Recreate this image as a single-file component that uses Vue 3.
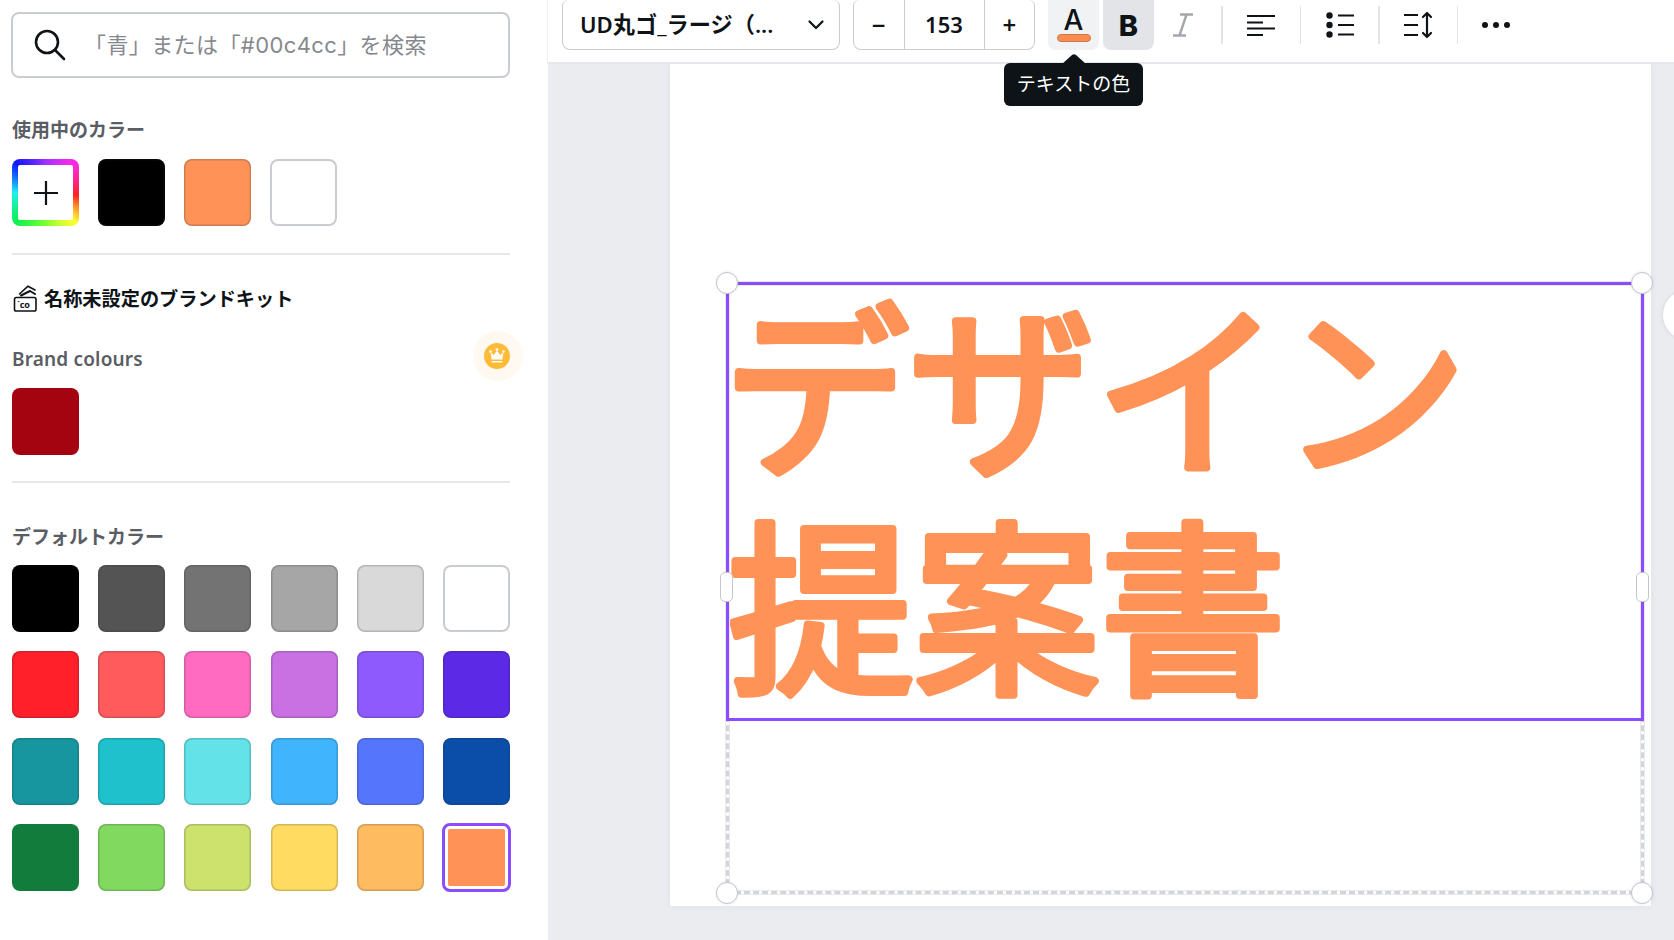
<script setup>
const used = ['#000000', '#ff9257', '#ffffff']
const rows = [
  '#000000', '#545454', '#737373', '#a6a6a6', '#d9d9d9', '#ffffff',
  '#ff202a', '#ff5a5c', '#ff6bc1', '#c970e3', '#8e59fd', '#5c29e6',
  '#17969f', '#1ec1cc', '#63e2e8', '#40b4fd', '#5576fc', '#0a4eaa',
  '#117c3b', '#81d95f', '#cce26d', '#ffdb61', '#ffbb5f', '#ff9257'
]
const isWhite = (c) => c === '#ffffff'
</script>

<template>
  <div class="app">
    <aside class="side">
      <div class="search">
        <svg class="search-icon" width="34" height="34" viewBox="0 0 34 34" fill="none" stroke="#0e1318" stroke-width="2.6" stroke-linecap="round">
          <circle cx="14" cy="14" r="11" />
          <path d="M22.5 22.5 31 31" />
        </svg>
        <span class="placeholder">「青」または「#00c4cc」を検索</span>
      </div>

      <h3 class="title used-title">使用中のカラー</h3>
      <div class="swatch-row">
        <div class="swatch rainbow">
          <div class="rainbow-in">
            <svg width="26" height="26" viewBox="0 0 26 26" stroke="#0e1318" stroke-width="2.2">
              <path d="M13 1v24M1 13h24" />
            </svg>
          </div>
        </div>
        <div v-for="c in used" :key="c" class="swatch" :class="{ white: isWhite(c) }" :style="{ background: c }"></div>
      </div>
      <div class="rule first-rule"></div>

      <div class="kit">
        <svg width="25" height="27" viewBox="0 0 25 27" fill="none" stroke="#0e1318" stroke-width="1.6" stroke-linecap="round" stroke-linejoin="round">
          <rect x="1.500" y="12.500" width="21.500" height="13.500" rx="1.800" />
          <path d="M6.500 9 15 1.200 22 5" />
          <path d="M8 10.500 17 6l5 3" stroke-width="2" />
          <text x="4.500" y="23" class="kit-co" fill="#0e1318" stroke="none">˙co</text>
        </svg>
        <span>名称未設定のブランドキット</span>
      </div>

      <div class="brand-head">
        <h3 class="title brand-title">Brand colours</h3>
        <div class="halo">
          <div class="crown">
            <svg width="16" height="16" viewBox="0 0 18 18" fill="#fff">
              <circle cx="1.800" cy="4" r="1.500" />
              <circle cx="9" cy="1.800" r="1.500" />
              <circle cx="16.200" cy="4" r="1.500" />
              <path d="M1.800 5 5.200 8 9 3l3.800 5 3.400-3-1.200 8H3z" />
              <rect x="3" y="14.600" width="12" height="1.800" rx=".6" />
            </svg>
          </div>
        </div>
      </div>
      <div class="swatch red"></div>
      <div class="rule second-rule"></div>

      <h3 class="title default-title">デフォルトカラー</h3>
      <div class="grid">
        <div
          v-for="(c, i) in rows"
          :key="i"
          class="swatch cell"
          :class="{ white: isWhite(c), selected: i === rows.length - 1 }"
          :style="{ backgroundColor: c }"
        ></div>
      </div>
    </aside>

    <main class="main">
      <header class="toolbar">
        <div class="select">
          <span>UD丸ゴ_ラージ（...</span>
          <svg width="18" height="12" viewBox="0 0 18 12" fill="none" stroke="#0e1318" stroke-width="2.2" stroke-linecap="round" stroke-linejoin="round">
            <path d="M2.500 2.500 9 9l6.500-6.500" />
          </svg>
        </div>
        <div class="stepper">
          <span class="step">−</span>
          <span class="step value">153</span>
          <span class="step">+</span>
        </div>
        <div class="tool color">
          <span class="a">A</span>
          <span class="a-bar"></span>
        </div>
        <div class="tool bold">B</div>
        <div class="tool italic">
          <svg width="20" height="24" viewBox="0 0 20 24" fill="none" stroke="#a3a7ad" stroke-width="2.400">
            <path d="M7 1.500h13M0 22.500h13M13.500 1.500 6.500 22.500" />
          </svg>
        </div>
        <i class="sep"></i>
        <div class="tool">
          <svg width="30" height="22" viewBox="0 0 30 22" stroke="#0e1318" stroke-width="2.200">
            <path d="M1 2h28M1 8.500h16M1 14.500h28M1 21h16" />
          </svg>
        </div>
        <i class="sep"></i>
        <div class="tool">
          <svg width="28" height="26" viewBox="0 0 28 26" fill="#0e1318">
            <circle cx="3.500" cy="3.500" r="3.200" />
            <circle cx="3.500" cy="13" r="3.200" />
            <circle cx="3.500" cy="22.500" r="3.200" />
            <path d="M12 2.400h16v2.200H12zM12 11.900h16v2.200H12zM12 21.400h16v2.200H12z" />
          </svg>
        </div>
        <i class="sep"></i>
        <div class="tool">
          <svg width="30" height="28" viewBox="0 0 30 28" fill="none" stroke="#0e1318" stroke-width="2.200" stroke-linecap="round" stroke-linejoin="round">
            <path d="M1 4h14M1 14h14M1 24h14" stroke-linecap="butt" />
            <path d="M24 2v24M20 6l4-4 4 4M20 22l4 4 4-4" />
          </svg>
        </div>
        <i class="sep"></i>
        <div class="tool dots">
          <svg width="30" height="8" viewBox="0 0 30 8" fill="#0e1318">
            <circle cx="4" cy="4" r="3" />
            <circle cx="15" cy="4" r="3" />
            <circle cx="26" cy="4" r="3" />
          </svg>
        </div>

        <div class="tooltip">
          <svg class="tip-arrow" width="24" height="10" viewBox="0 0 24 10" fill="#0e1318">
            <path d="M0 10h24L14 1q-2-1.600-4 0z" />
          </svg>
          <span class="tip-text">テキストの色</span>
        </div>
      </header>

      <section class="stage">
        <div class="page">
          <svg class="art" width="981" height="842" viewBox="0 0 981 842">
            <text x="53" y="398" class="art-text">デザイン</text>
            <text x="58" y="616" class="art-text">提案書</text>
          </svg>
          <div class="dashed"></div>
          <div class="selection"></div>
          <span class="knob tl"></span>
          <span class="knob tr"></span>
          <span class="knob bl"></span>
          <span class="knob br"></span>
          <span class="pill left"></span>
          <span class="pill right"></span>
        </div>
        <div class="edge-btn"></div>
      </section>
    </main>
  </div>
</template>

<style>
html, body { margin: 0; background: #fff; }
</style>

<style scoped>
.app {
  display: flex;
  width: 1674px;
  height: 940px;
  overflow: hidden;
  font-family: "Noto Sans", "Noto Sans CJK JP", sans-serif;
  color: #0e1318;
  background: #fff;
}
.side {
  width: 548px;
  flex: none;
  box-sizing: border-box;
  padding: 12px 38px 0 12px;
  background: #fff;
}
.search {
  display: flex;
  align-items: center;
  height: 66px;
  margin-left: -1px;
  box-sizing: border-box;
  border: 2px solid #c9ccd1;
  border-radius: 8px;
  padding: 0 0 0 20px;
}
.search-icon { flex: none; }
.placeholder {
  margin-left: 17px;
  font-family: "Inter", "Noto Sans CJK JP", sans-serif;
  font-size: 22px;
  letter-spacing: 0.4px;
  color: #85888e;
  white-space: nowrap;
  margin-top: -5px;
}
.title {
  margin: 0;
  font-size: 19px;
  line-height: 26px;
  font-weight: 600;
  color: #5a5d63;
}
.used-title { margin-top: 39px; }
.brand-title { letter-spacing: 0.17px; }
.swatch-row {
  display: flex;
  gap: 19px;
  margin-top: 16px;
}
.swatch {
  width: 67px;
  height: 67px;
  flex: none;
  box-sizing: border-box;
  border-radius: 8px;
  box-shadow: inset 0 0 0 1.500px rgba(30, 40, 50, 0.2);
}
.swatch.white { box-shadow: inset 0 0 0 2px #c9ccd1; }
.rainbow {
  box-shadow: none;
  padding: 6px;
  background: conic-gradient(#a030ff, #ff28e6 45deg, #ff2020 95deg, #ffff30 135deg, #70ff30 185deg, #10f050 225deg, #20f0f0 270deg, #1018ff 315deg, #a030ff);
}
.rainbow-in {
  display: flex;
  align-items: center;
  justify-content: center;
  height: 100%;
  background: #fff;
  border-radius: 2px;
}
.rule { height: 2px; background: #e6e7eb; }
.first-rule { margin-top: 27px; }
.kit {
  display: flex;
  align-items: center;
  gap: 6px;
  margin-top: 30px;
  font-size: 19.200px;
  font-weight: 700;
  line-height: 26px;
}
.kit svg { margin-left: 1px; }
.kit-co { font: 700 9px "Noto Sans", sans-serif; }
.brand-head {
  display: flex;
  align-items: center;
  justify-content: space-between;
  margin-top: 19px;
  height: 50px;
  position: relative;
}
.brand-head .title { margin-top: 6px; }
.halo {
  display: flex;
  align-items: center;
  justify-content: center;
  width: 50px;
  height: 50px;
  margin-right: -13px;
  border-radius: 50%;
  background: #fff9f1;
}
.crown {
  display: flex;
  align-items: center;
  justify-content: center;
  width: 26px;
  height: 26px;
  margin-left: -2px;
  border-radius: 50%;
  background: #ffbb38;
}
.red {
  margin-top: 7px;
  background: #a30410;
  box-shadow: none;
}
.second-rule { margin-top: 26px; }
.default-title { margin-top: 41px; }
.grid {
  display: grid;
  grid-template-columns: repeat(6, 1fr);
  column-gap: 19.200px;
  row-gap: 19.300px;
  margin-top: 15px;
  width: 498px;
}
.cell { width: auto; }
.cell:nth-child(-n+1), .cell:nth-child(19) { box-shadow: none; }
.cell.selected {
  margin: -1px;
  height: 69px;
  border: 3px solid #8b4dff;
  padding: 3px;
  background-clip: content-box;
  box-shadow: none;
}
.main {
  flex: 1;
  min-width: 0;
  display: flex;
  flex-direction: column;
  box-sizing: border-box;
}
.toolbar {
  position: relative;
  z-index: 2;
  height: 64px;
  flex: none;
  box-sizing: border-box;
  display: flex;
  align-items: flex-start;
  gap: 13px;
  padding-left: 14px;
  background: #fff;
  border-bottom: 2px solid #e6e7eb;
  box-shadow: -1px 0 0 #eceef0;
}
.select {
  display: flex;
  align-items: center;
  justify-content: space-between;
  box-sizing: border-box;
  width: 278px;
  height: 50px;
  padding: 0 14px 0 17px;
  border: 1.500px solid #c9ccd1;
  border-top: none;
  border-radius: 6px 6px 8px 8px;
  font-size: 22.200px;
  font-weight: 600;
  white-space: nowrap;
}
.select span { margin-top: -2px; }
.stepper {
  display: flex;
  box-sizing: border-box;
  width: 182px;
  height: 50px;
  border: 1.500px solid #c9ccd1;
  border-top: none;
  border-radius: 6px 6px 8px 8px;
}
.step {
  display: flex;
  align-items: center;
  justify-content: center;
  flex: 1;
  font-size: 24px;
  font-weight: 600;
  padding-bottom: 1px;
}
.step.value {
  flex: none;
  width: 79px;
  font-size: 22px;
  border-left: 1.500px solid #c9ccd1;
  border-right: 1.500px solid #c9ccd1;
}
.tool {
  display: flex;
  flex-direction: column;
  align-items: center;
  justify-content: center;
  flex: none;
  width: 51px;
  height: 50px;
  border-radius: 0 0 8px 8px;
}
.color {
  position: relative;
  background: #f1f2f4;
}
.a {
  font-family: "Inter", sans-serif;
  font-size: 28px;
  line-height: 30px;
  font-weight: 500;
  margin-top: -3px;
}
.a-bar {
  width: 34px;
  height: 8px;
  margin-top: -1px;
  border-radius: 4px;
  background: #ff8c4d;
  border: 1px solid #c97a4c;
  box-sizing: border-box;
}
.bold {
  margin-left: -9px;
  background: #e3e4e8;
  font-family: "Inter", sans-serif;
  font-size: 29px;
  font-weight: 800;
}
.italic { margin-left: -10px; }
.dots { margin-left: -1px; }
.sep {
  flex: none;
  width: 1.500px;
  height: 38px;
  margin-top: 6px;
  background: #e3e4e8;
}
.tooltip {
  position: absolute;
  left: 456px;
  top: 63px;
  width: 139px;
  height: 43px;
  box-sizing: border-box;
  display: flex;
  align-items: center;
  justify-content: center;
  padding-bottom: 4px;
  background: #0e1318;
  color: #fff;
  font-size: 19px;
  border-radius: 6px;
  white-space: nowrap;
}
.tip-arrow {
  position: absolute;
  left: 58px;
  top: -9px;
}
.stage {
  position: relative;
  flex: 1;
  background: #ebecf0;
  overflow: hidden;
}
.page {
  position: relative;
  width: 981px;
  height: 842px;
  margin-left: 122px;
  background: #fff;
  box-shadow: 0 0 6px rgba(64, 87, 109, 0.08);
}
.art {
  position: absolute;
  left: 0;
  top: 0;
}
.art-text {
  font-family: "Noto Sans CJK JP", sans-serif;
  font-size: 186px;
  font-weight: 400;
  fill: #ff9257;
  stroke: #ff9257;
  stroke-width: 8px;
  stroke-linejoin: round;
  stroke-linecap: round;
}
.dashed {
  position: absolute;
  left: 55.500px;
  top: 217.500px;
  width: 918px;
  height: 612.500px;
  box-sizing: border-box;
  border: 3px dashed #d4d5da;
  box-shadow: 0 0 0 1px #e8e9ec, inset 0 0 0 1px #e8e9ec;
}
.selection {
  position: absolute;
  left: 55.500px;
  top: 217.500px;
  width: 918px;
  height: 439px;
  box-sizing: border-box;
  border: 3px solid #8b4dff;
}
.knob {
  position: absolute;
  width: 22px;
  height: 22px;
  box-sizing: border-box;
  background: #fff;
  border: 1px solid #c3c6cc;
  border-radius: 50%;
  box-shadow: 0 0 3px rgba(64, 87, 109, 0.15);
}
.tl { left: 46px; top: 208px; }
.tr { left: 961px; top: 208px; }
.bl { left: 46px; top: 818px; }
.br { left: 961px; top: 818px; }
.pill {
  position: absolute;
  top: 508px;
  width: 13px;
  height: 30px;
  box-sizing: border-box;
  background: #fff;
  border: 1px solid #c3c6cc;
  border-radius: 5px;
}
.left { left: 50px; }
.right { left: 966px; }
.edge-btn {
  position: absolute;
  left: 1115px;
  top: 226px;
  width: 50px;
  height: 50px;
  border-radius: 50%;
  background: #fff;
  box-shadow: 0 0 4px rgba(64, 87, 109, 0.15);
}
</style>
